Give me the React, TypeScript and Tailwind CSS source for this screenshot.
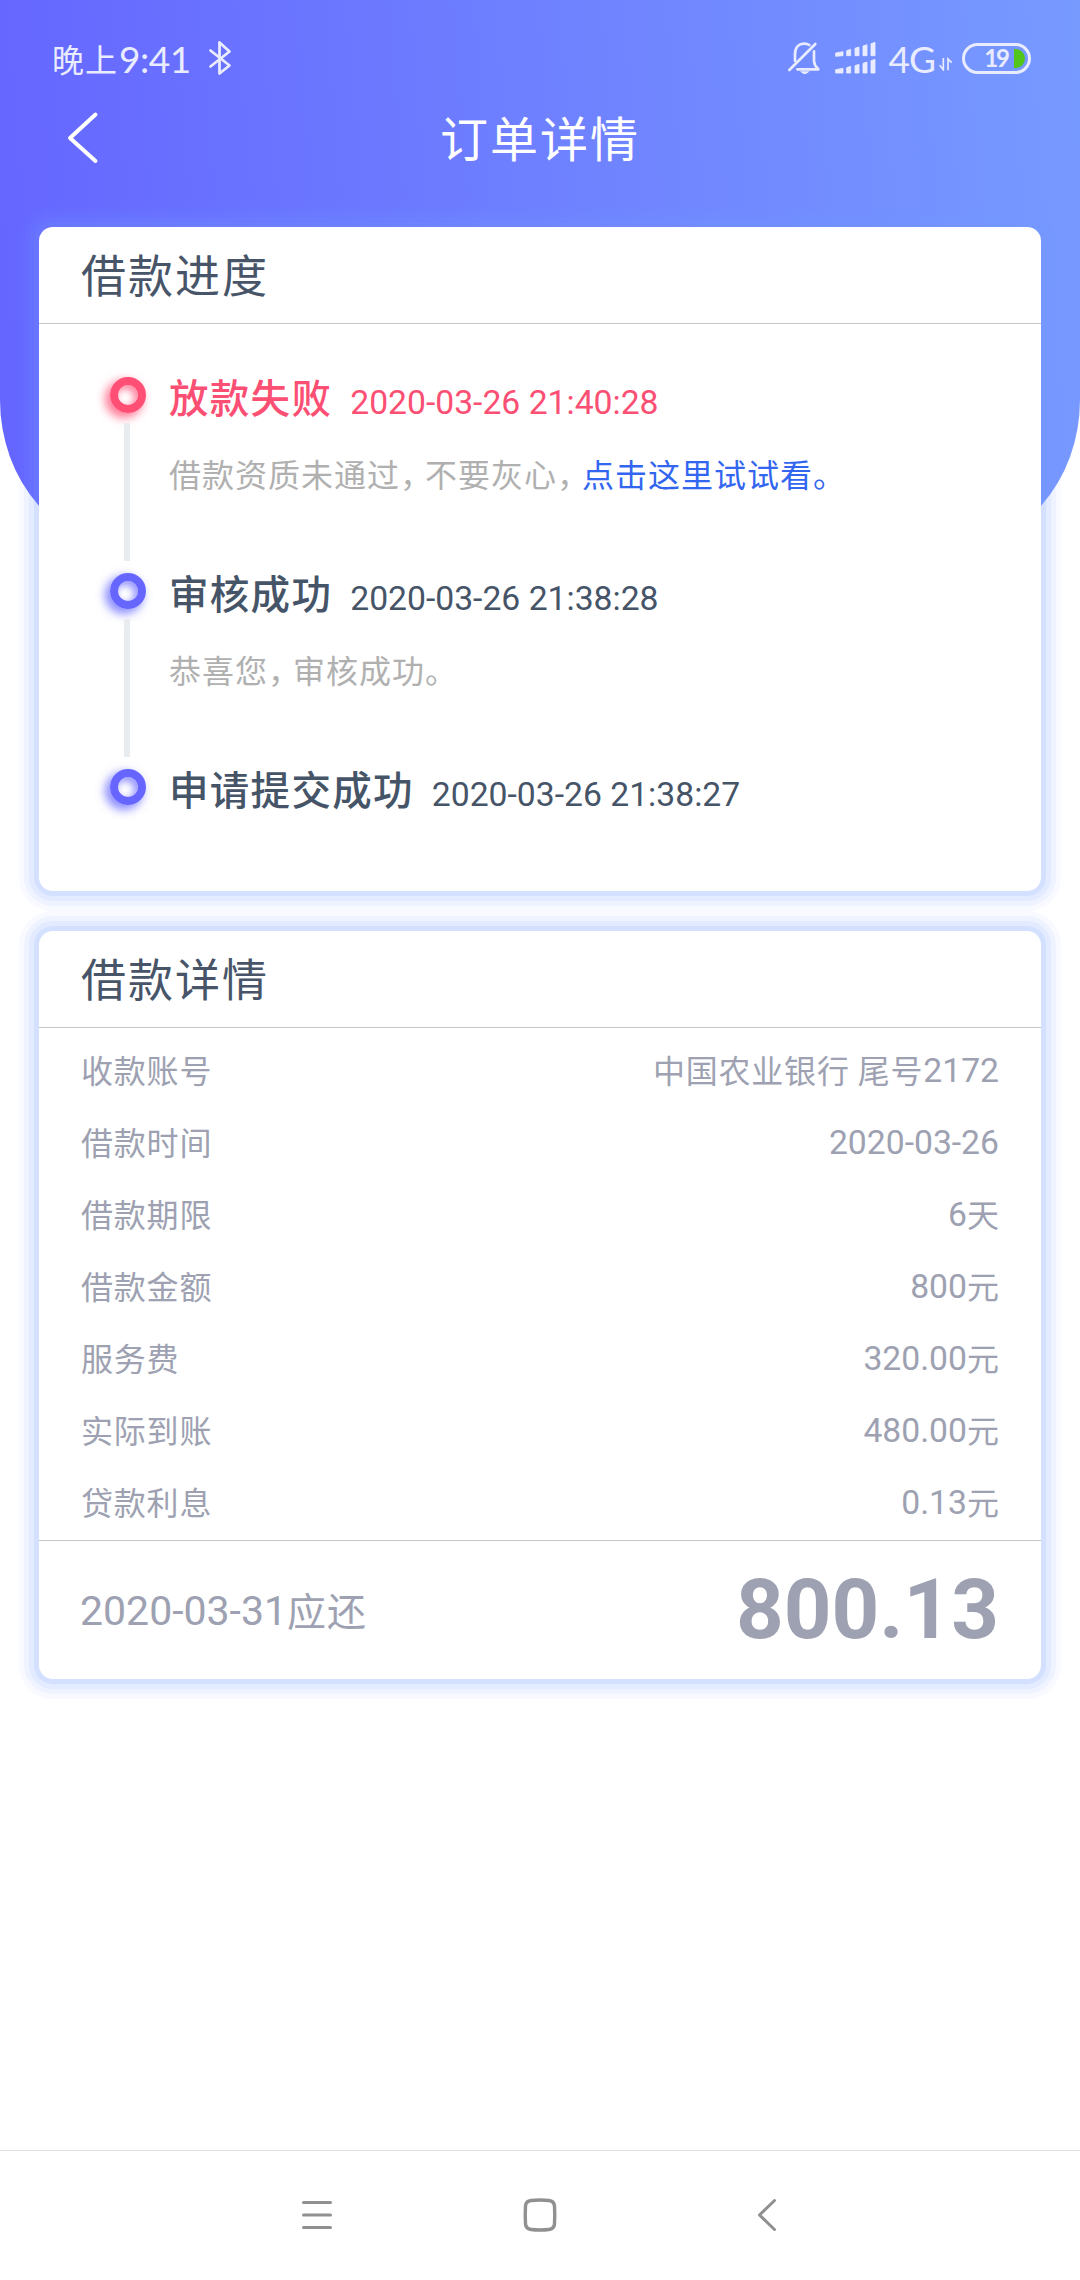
import type { ReactNode } from "react";

const cardClass =
  "mx-[39px] rounded-[14px] bg-white shadow-[0_0_0_5px_rgba(119,155,255,0.125),0_0_0_10px_rgba(119,155,255,0.093),0_0_0_15px_rgba(119,155,255,0.07),0_0_0_20px_rgba(119,155,255,0.05)]";

function StatusBar() {
  return (
    <div className="flex h-[116px] items-center pl-[52px] pr-[49px] text-[#e9ecff]">
      <div className="flex h-[40px] items-center leading-[40px]">
        <span className="text-[32px] tracking-[1px]">晚上</span>
        <span className="ml-[1px] mt-px font-['Lato'] text-[37px] tracking-[-0.5px]">9:41</span>
      </div>
      <svg className="ml-[17px]" width="24" height="36" viewBox="0 0 24 36" fill="none" stroke="currentColor" strokeWidth="2.8" strokeLinejoin="round" strokeLinecap="round">
        <path d="M2.500 10.500 21.500 25.500 11.500 33.500V2.500L21.500 11.500 2.500 26.500" />
      </svg>
      <div className="flex-1" />
      <svg width="34" height="34" viewBox="79 62 102 102" fill="none" stroke="currentColor" strokeWidth="8" strokeLinecap="round" strokeLinejoin="round">
        <path d="M86 149 164 71" />
        <path d="M103 122V102C103 80 116 70 131 70Q140 70 146 74" />
        <path d="M160 93V122Q161 136 173 147H110" />
        <path d="M118 153H147Q132 170 118 153Z" fill="currentColor" stroke="none" />
      </svg>
      <svg className="ml-[14px]" width="42" height="34" viewBox="224 65 126 102" fill="currentColor" stroke="currentColor" strokeWidth="2.500" strokeLinejoin="round">
        <path d="M226 101 248 97V109L226 111ZM259 94 271 90V109H259ZM284 87 296 83V109H284ZM308 80 320 76V109H308ZM332 73 344 69V109H332Z" />
        <path d="M226 151 248 147V161H226ZM259 145 271 141V161H259ZM284 139 296 135V161H284ZM308 132 320 128V161H308ZM332 124 344 120V161H332Z" />
      </svg>
      <span className="ml-[12px] mt-px font-['Lato'] text-[37px] leading-[40px] tracking-[-1px]">4G</span>
      <svg className="ml-[4px] mt-[12px]" width="14" height="14" viewBox="540 114 42 42" fill="none" stroke="currentColor" strokeWidth="5">
        <path d="M553 117V152L542 139M567 154V120L578 131" />
      </svg>
      <div className="ml-[9px] flex h-[31px] w-[69px] items-center justify-end rounded-full border-[3px] border-current pr-[3px]">
        <span className="mr-[6px] font-['Lato'] text-[24px] font-bold leading-[24px] tracking-[-2px]">19</span>
        <span className="h-[19px] w-[11px] rounded-r-full bg-[#52c41a]" />
      </div>
    </div>
  );
}

function TitleBar() {
  return (
    <div className="-mt-[7px] grid h-[60px] grid-cols-[200px_1fr_200px] items-center text-white">
      <svg className="ml-[64px]" width="40" height="56" viewBox="0 0 40 56" fill="none" stroke="currentColor" strokeWidth="4" strokeLinecap="round" strokeLinejoin="round">
        <path d="M31.500 3.500 6 27 31.500 50" />
      </svg>
      <h1 className="-mt-[6px] text-center text-[48px] font-normal leading-[60px] tracking-[2px]">订单详情</h1>
    </div>
  );
}

function CardTitle({ children }: { children: ReactNode }) {
  return (
    <h2 className="h-[97px] border-b border-[#c4c7c9] pl-[42px] text-[45px] font-normal leading-[94px] tracking-[2px] text-[#485569]">
      {children}
    </h2>
  );
}

function Comma() {
  return <span className="tracking-[-7px]">，</span>;
}

function Step({ title, time, failed, last, children }: { title: string; time: string; failed?: boolean; last?: boolean; children?: ReactNode }) {
  return (
    <li className={last ? "flex h-[112px]" : "flex h-[196px]"}>
      <div className="flex w-[36px] shrink-0 flex-col items-center">
        <span
          className={
            failed
              ? "size-[36px] shrink-0 rounded-full border-8 border-[#ff4f75] shadow-[-4px_4px_10px_1px_rgba(255,79,117,0.75),inset_-3px_3px_7px_1px_rgba(255,79,117,0.65)]"
              : "size-[36px] shrink-0 rounded-full border-8 border-[#6666ff] shadow-[-4px_4px_10px_1px_rgba(102,102,255,0.75),inset_-3px_3px_7px_1px_rgba(102,102,255,0.65)]"
          }
        />
        {!last && <span className="mr-[2px] mt-[10px] h-[138px] w-[6px] shrink-0 bg-[#e9ecee]" />}
      </div>
      <div className="ml-[23px] -mt-[3px]">
        <div className={failed ? "flex h-[44px] items-center text-[#fb4f74]" : "flex h-[44px] items-center text-[#465468]"}>
          <h3 className="text-[39.500px] font-medium leading-[44px] tracking-[1.300px]">{title}</h3>
          <time className="ml-[18px] mt-[13px] font-['Roboto'] text-[33.700px] leading-[44px]">{time}</time>
        </div>
        <p className="mt-[32px] text-[32px] font-normal leading-[46px] tracking-[1px] text-[#b0b0b0]">{children}</p>
      </div>
    </li>
  );
}

const details = [
  ["收款账号", "中国农业银行 尾号", "2172", ""],
  ["借款时间", "", "2020-03-26", ""],
  ["借款期限", "", "6", "天"],
  ["借款金额", "", "800", "元"],
  ["服务费", "", "320.00", "元"],
  ["实际到账", "", "480.00", "元"],
  ["贷款利息", "", "0.13", "元"],
];

function DetailRows() {
  return (
    <dl className="pb-px pl-[42px] pr-[42px] pt-[7px] text-[32px] tracking-[0.800px] text-[#9da1b1]">
      {details.map(([label, before, value, after]) => (
        <div key={label} className="flex h-[72px] items-center justify-between leading-[68px]">
          <dt className="h-[72px]">{label}</dt>
          <dd className="flex h-[72px]">
            <span className="whitespace-pre">{before}</span>
            <span className="font-['Roboto'] text-[33.700px] leading-[72px] tracking-normal">{value}</span>
            <span className="tracking-normal">{after}</span>
          </dd>
        </div>
      ))}
    </dl>
  );
}

function NavBar() {
  return (
    <nav className="flex h-[130px] shrink-0 items-center border-t border-[#e0e0e0] pb-px text-[#909090]">
      <svg className="ml-[300px]" width="34" height="34" viewBox="0 0 34 34" fill="none" stroke="currentColor" strokeWidth="3" strokeLinecap="round">
        <path d="M3.500 4.500H30.500M3.500 17H30.500M3.500 29.500H30.500" />
      </svg>
      <svg className="ml-[188px]" width="36" height="36" viewBox="0 0 36 36" fill="none" stroke="currentColor" strokeWidth="3.400">
        <path d="M9 3.500Q18 2.500 27 3.500 32 4 32.500 9 33 18 32.500 27 32 32 27 32.500 18 33.500 9 32.500 4 32 3.500 27 3 18 3.500 9 4 4 9 3.500Z" />
      </svg>
      <svg className="ml-[198px]" width="24" height="36" viewBox="0 0 24 36" fill="none" stroke="currentColor" strokeWidth="3" strokeLinecap="round" strokeLinejoin="round">
        <path d="M18.500 3.500 3.500 18 18.500 32.500" />
      </svg>
    </nav>
  );
}

export default function App() {
  return (
    <div className="flex h-[2280px] w-[1080px] flex-col overflow-hidden bg-white font-['Noto_Sans_CJK_SC',sans-serif]">
      <header className="h-[548px] shrink-0 rounded-b-[130px_148px] bg-[linear-gradient(85deg,#6565ff,#779aff)]">
        <StatusBar />
        <TitleBar />
      </header>
      <main className="-mt-[321px] flex-1">
        <section className={`${cardClass} h-[664px]`}>
          <CardTitle>借款进度</CardTitle>
          <ol className="pl-[71px] pt-[53px]">
            <Step title="放款失败" time="2020-03-26 21:40:28" failed>
              借款资质未通过
              <Comma />
              不要灰心
              <Comma />
              <a className="text-[#3366f0]">点击这里试试看。</a>
            </Step>
            <Step title="审核成功" time="2020-03-26 21:38:28">
              恭喜您
              <Comma />
              审核成功。
            </Step>
            <Step title="申请提交成功" time="2020-03-26 21:38:27" last />
          </ol>
        </section>
        <section className={`${cardClass} mt-[40px] h-[748px]`}>
          <CardTitle>借款详情</CardTitle>
          <DetailRows />
          <footer className="flex h-[139px] items-center justify-between border-t border-[#c4c7c9] pl-[41px] pr-[42px] text-[#9da1b1]">
            <div className="flex items-center leading-[60px]">
              <span className="mt-[2px] font-['Roboto'] text-[41px]">2020-03-31</span>
              <span className="-mt-[2px] text-[39px] tracking-[1px]">应还</span>
            </div>
            <strong className="font-['Roboto'] text-[83.300px] font-bold leading-none">800.13</strong>
          </footer>
        </section>
      </main>
      <NavBar />
    </div>
  );
}
